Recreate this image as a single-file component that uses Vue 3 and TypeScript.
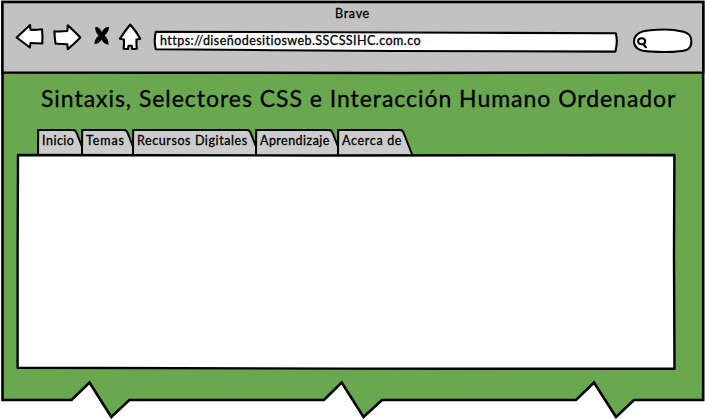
<script setup lang="ts">
interface Tab {
  label: string
  width: number
  spacing: number
}

const title = 'Sintaxis, Selectores CSS e Interacción Humano Ordenador'
const url = 'https://diseñodesitiosweb.SSCSSIHC.com.co'

const tabs: Tab[] = [
  { label: 'Inicio', width: 44, spacing: 0.5 },
  { label: 'Temas', width: 51, spacing: 0.9 },
  { label: 'Recursos Digitales', width: 123, spacing: 0.59 },
  { label: 'Aprendizaje', width: 82, spacing: 0.46 },
  { label: 'Acerca de', width: 71, spacing: 0.68 },
]

// Tab outline: rounded upper right corner that slopes past the next tab's edge.
const outline = (w: number): string =>
  `M1 26.5 L1.2 1 L${w - 8} .9 Q${w - 5.5} 1 ${w - 4.5} 3.6 L${w + 4.3} 26`
</script>

<template>
  <div class="window">
    <svg class="frame" width="705" height="419" viewBox="0 0 705 419" aria-hidden="true">
      <path class="page" d="M2.5 2 H703.2 V400 H634 L616 417 L594 382.5 L576 400 H382 L363.5 417 L341.7 382.5 L324 400 H129.3 L111.3 417 L89.5 382.5 L71.5 400 H2.5 Z" />
      <path class="chrome" d="M2.5 2 H703.2 V72.5 L400 73 L2.5 72.5 Z" />
    </svg>

    <div class="content">
      <header class="browser">
        <div class="name"><span>Brave</span></div>
        <div class="toolbar">
          <svg class="nav" width="142" height="34" viewBox="0 0 142 34" aria-hidden="true">
            <path class="ink" d="M16.7 17.5 L30 5 L30.5 9.8 Q36 10 42 9.2 Q42.8 16 42.3 23.5 Q36 23 30.5 23 L29.8 27.5 Z" />
            <path class="ink" d="M54.4 11.2 Q60 11.8 67.3 11 L67.8 5.4 Q72 9 80.4 17.5 Q75 23 67.8 29.2 L67.3 24.2 Q61 23.6 55.6 23.7 Q54.5 17 54.4 11.2 Z" />
            <path class="cross" d="M95.3 7.2 Q99 6.4 101.8 12 Q105 6.2 109.2 7.2 Q108.5 12 104.6 15.6 Q108.6 19.5 108.6 24.6 Q104 24.5 101.6 19.8 Q98 25 94.2 23.6 Q94.8 19 98.6 15.5 Q94.5 11.5 95.3 7.2 Z" />
            <path class="ink" d="M130.2 4.5 Q136 11 140.3 18.8 L136.5 19.5 Q136.2 24 136.8 28.8 L132.3 29 L131.8 25.8 L128.5 25.8 L128 29 L123.6 28.8 Q124.3 24 123.9 19.5 L119.8 18.8 Q125 11 130.2 4.5 Z" />
          </svg>
          <div class="address">
            <svg class="layer" width="465" height="24" viewBox="0 0 465 24" aria-hidden="true">
              <path class="ink" d="M2.8 1.7 L180 2.3 L320 2.8 L462.8 3.2 Q465 11 462.4 21.6 L240 21 L120 20.2 L2.8 19.2 Q.6 11 2.8 1.7 Z" />
            </svg>
            <span class="url">{{ url }}</span>
          </div>
          <svg class="search" width="62" height="26" viewBox="0 0 62 26" aria-hidden="true">
            <path class="ink" d="M2 14 C2 6 9 3 18 2.3 C30 1 43 1.6 50 3.4 C58 5 59.7 9 59.3 14.5 C59 21 55 22.5 47 23.2 C36 24.8 26 24 16 23.4 C8 23 2.4 20 2 14 Z" />
            <path class="lens" d="M6.1 13.3 C5.8 9.6 12.6 9 13.2 13 C13.2 17.2 6.4 17.5 6.1 13.3 Z M11.3 16.2 L13.9 19.2" />
          </svg>
        </div>
      </header>

      <main class="body">
        <h1 class="title"><span>{{ title }}</span></h1>
        <nav class="tabs">
          <a v-for="tab in tabs" :key="tab.label" class="tab" :style="{ width: tab.width + 'px' }">
            <svg class="layer" :width="tab.width + 6" height="27" aria-hidden="true">
              <path :d="outline(tab.width)" />
            </svg>
            <span class="caption" :style="{ letterSpacing: tab.spacing + 'px' }">{{ tab.label }}</span>
          </a>
        </nav>
        <section class="panel">
          <svg width="660" height="218" viewBox="0 0 660 218" aria-hidden="true">
            <path class="sheet" d="M2 2 L300 2.5 L658.4 2 L658 100 L658.5 215.8 L330 215.6 L1.6 214.8 L1.6 100 Z" />
          </svg>
        </section>
      </main>
    </div>
  </div>
</template>

<style>
body {
  background: #fff;
}
</style>

<style scoped>
.window {
  display: grid;
  width: 705px;
  height: 419px;
  overflow: hidden;
  color: #000;
  font-family: Lato, "Liberation Sans", sans-serif;
  font-size: 12.5px;
  -webkit-text-stroke: 0.3px #000;
}
.frame,
.content {
  grid-area: 1 / 1;
}
svg {
  display: block;
}
.page,
.chrome {
  stroke: #000;
  stroke-width: 2.4;
}
.page {
  fill: #6aa84f;
  stroke-width: 2.6;
}
.chrome {
  fill: #c2c2c2;
}
.content {
  z-index: 1;
}
.browser {
  height: 73px;
}
.name {
  height: 20px;
  padding-top: 5px;
  box-sizing: border-box;
  text-align: center;
  line-height: 18px;
  letter-spacing: 0.7px;
}
.toolbar {
  display: flex;
  align-items: flex-start;
}
.nav {
  flex: none;
}
.ink {
  fill: #fff;
  stroke: #000;
  stroke-width: 2.1;
  stroke-linejoin: round;
}
.cross {
  fill: #000;
}
.address {
  display: grid;
  width: 465px;
  height: 24px;
  margin: 10px 14px 0 11px;
}
.address > *,
.tab > * {
  grid-area: 1 / 1;
}
.url {
  padding-left: 7px;
  line-height: 22px;
  letter-spacing: 0.45px;
  white-space: nowrap;
  justify-self: start;
}
.search {
  margin-top: 8px;
}
.lens {
  fill: none;
  stroke: #000;
  stroke-width: 2.1;
  stroke-linecap: round;
}
.title {
  height: 56px;
  margin: 0;
  padding-left: 41px;
  font-size: 23px;
  font-weight: 400;
  line-height: 51px;
  letter-spacing: 0.96px;
  white-space: nowrap;
}
.tabs {
  display: flex;
  height: 25px;
  padding-left: 37px;
}
.tab {
  display: grid;
  height: 25px;
}
.tab path {
  fill: #ccc;
  stroke: #000;
  stroke-width: 2;
}
.caption {
  padding-left: 5px;
  line-height: 24px;
  white-space: nowrap;
  justify-self: start;
}
.panel {
  position: relative;
  padding-left: 16px;
  margin-top: -1px;
}
.sheet {
  fill: #fff;
  stroke: #000;
  stroke-width: 2.4;
  stroke-linejoin: round;
}
</style>
